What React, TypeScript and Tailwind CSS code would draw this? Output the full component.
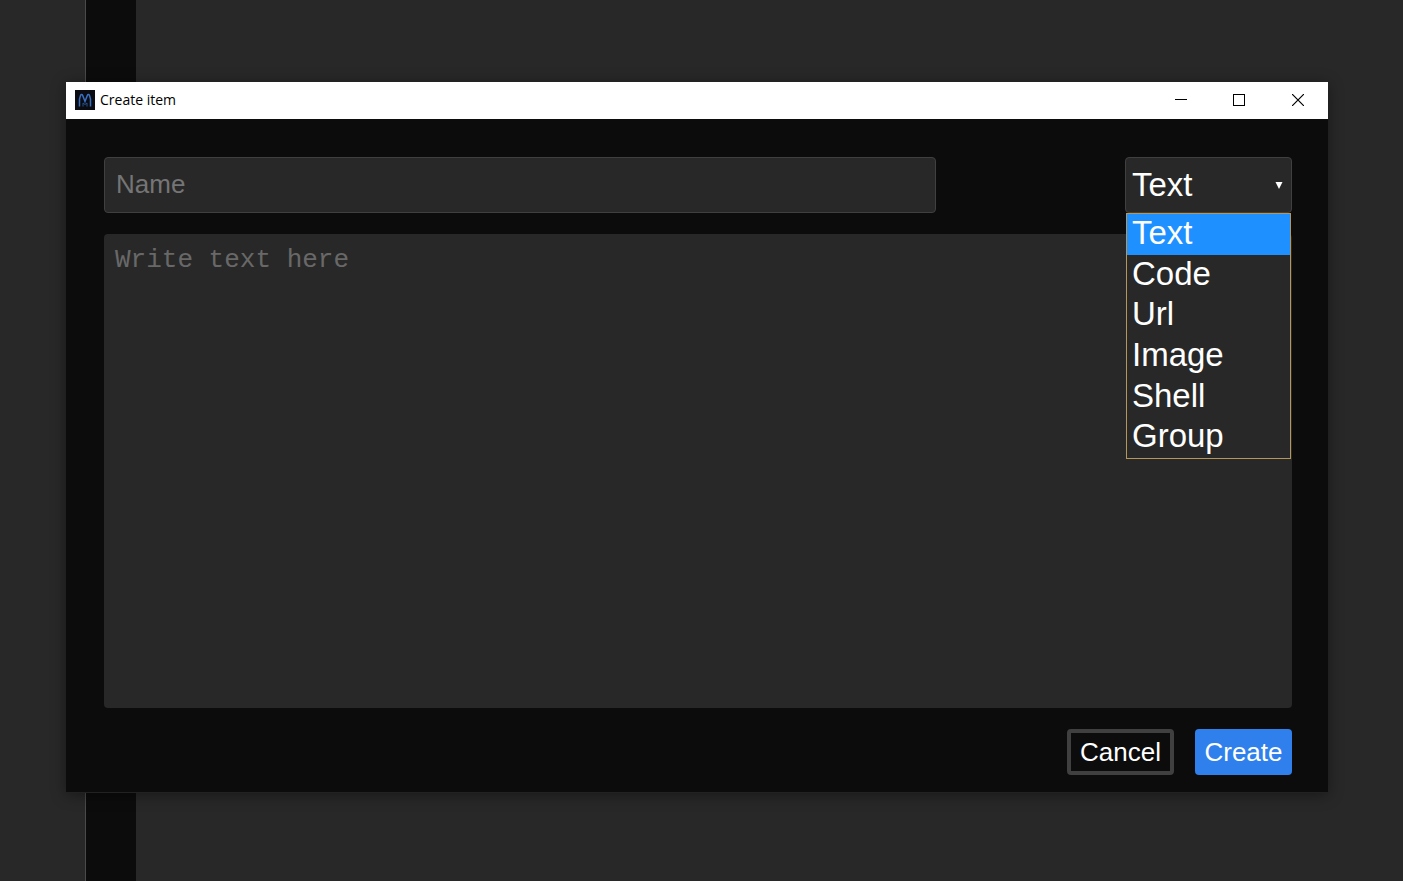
import { useState } from "react"

const itemTypes = ["Text", "Code", "Url", "Image", "Shell", "Group"]

function TitleBar() {
  return (
    <header className="flex h-[37px] shrink-0 items-center bg-white pb-px pl-[9px] text-black">
      <svg className="size-5" viewBox="0 0 20 20" fill="none" aria-hidden="true">
        <rect width="20" height="20" fill="#0b0c12" />
        <path d="M4.5 16.5V9L5.5 5.5C6 4.2 7.2 4.2 7.7 5.5L10 11.5L12.3 5.5C12.8 4.2 14 4.2 14.5 5.5L15.5 9V16.5" stroke="#3a6fc0" strokeWidth="1.5" />
        <path d="M8 16.5V13L10 14.5L12 13V16.5" stroke="#26508f" strokeWidth="1" />
      </svg>
      <h1 className="ml-[5px] flex-1 font-['Open_Sans',sans-serif] text-sm">Create item</h1>
      <div className="flex h-full">
        <button type="button" aria-label="Minimize" className="flex w-[58px] items-center justify-center">
          <svg className="size-3" viewBox="0 0 12 12" shapeRendering="crispEdges">
            <path d="M0 5.5H12" stroke="currentColor" />
          </svg>
        </button>
        <button type="button" aria-label="Maximize" className="flex w-[58px] items-center justify-center">
          <svg className="size-3" viewBox="0 0 12 12" fill="none" shapeRendering="crispEdges">
            <rect x="0.5" y="0.5" width="11" height="11" stroke="currentColor" />
          </svg>
        </button>
        <button type="button" aria-label="Close" className="flex w-[60px] items-center justify-center">
          <svg className="size-3" viewBox="0 0 12 12">
            <path d="M0 0L12 12M12 0L0 12" stroke="currentColor" strokeWidth="1.2" />
          </svg>
        </button>
      </div>
    </header>
  )
}

function TypeSelect() {
  const [type, setType] = useState("Text")
  const [open, setOpen] = useState(true)

  const pick = (value: string) => {
    setType(value)
    setOpen(false)
  }

  return (
    <div className="relative w-[167px]">
      <select
        aria-label="Item type"
        value={type}
        onChange={(e) => pick(e.target.value)}
        onMouseDown={(e) => {
          e.preventDefault()
          setOpen(!open)
        }}
        className="h-14 w-full appearance-none rounded border border-[#404040] bg-[#282828] px-1.5 text-[33px] text-white outline-none"
      >
        {itemTypes.map((item) => (
          <option key={item}>{item}</option>
        ))}
      </select>
      <svg className="pointer-events-none absolute top-6 right-[9px] size-2" viewBox="0 0 8 8" aria-hidden="true">
        <path d="M0.5 1H7.5L4 8Z" fill="white" />
      </svg>

      {open && (
        <ul
          role="listbox"
          aria-label="Item types"
          className="absolute inset-x-px top-full z-10 grid h-[246px] grid-rows-6 border border-[#b5975a] bg-[#282828] text-[33px] leading-[38px] text-white"
        >
          {itemTypes.map((item) => (
            <li
              key={item}
              role="option"
              aria-selected={item === type}
              onClick={() => pick(item)}
              className="cursor-default pl-[5px] aria-selected:bg-[#1e90ff]"
            >
              {item}
            </li>
          ))}
        </ul>
      )}
    </div>
  )
}

export default function App() {
  return (
    <div className="grid min-h-screen bg-[#282828] font-['Liberation_Sans',Arial,sans-serif]">
      {/* Main window behind the dialog */}
      <div className="col-start-1 row-start-1 flex pl-[85px]">
        <div className="w-[51px] border-l border-[#4a4a4a] bg-[#0c0c0c]" />
      </div>

      <div className="col-start-1 row-start-1 flex pt-[82px] pr-[75px] pb-[88px] pl-[66px]">
        <section className="flex flex-1 flex-col bg-[#0c0c0c] shadow-[0_2px_14px_rgba(0,0,0,0.4)]">
          <TitleBar />
          <form
            onSubmit={(e) => e.preventDefault()}
            className="flex flex-1 flex-col gap-[21px] border-b border-[#222222] pt-[38px] pr-9 pb-[17px] pl-[38px]"
          >
            <div className="flex justify-between">
              <input
                type="text"
                aria-label="Name"
                placeholder="Name"
                className="h-14 w-[70%] rounded border border-[#404040] bg-[#282828] px-[11px] pb-0.5 text-[26px] text-white outline-none placeholder:text-[#757575]"
              />
              <TypeSelect />
            </div>

            <textarea
              aria-label="Text"
              placeholder="Write text here"
              className="flex-1 resize-none rounded bg-[#282828] px-[11px] py-[10px] font-['Liberation_Mono','Courier_New',monospace] text-[26px] leading-8 text-white outline-none placeholder:text-[#686868]"
            />

            <div className="flex justify-end gap-[21px]">
              <button type="button" className="h-[46px] w-[107px] rounded border-4 border-[#404040] text-[26px] leading-8 text-white">
                Cancel
              </button>
              <button type="submit" className="h-[46px] w-[97px] rounded bg-[#2f80ed] text-[26px] leading-8 text-white">
                Create
              </button>
            </div>
          </form>
        </section>
      </div>
    </div>
  )
}
